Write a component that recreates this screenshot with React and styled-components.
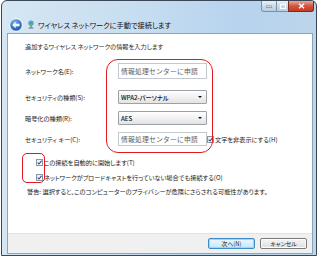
import React from 'react'
import styled, { createGlobalStyle } from 'styled-components'

const Global = createGlobalStyle`
  html, body {
    margin: 0;
    background: #ffffff;
  }
  body {
    font-family: "Noto Sans CJK JP", "Noto Sans", sans-serif;
    font-feature-settings: "palt";
    color: #1e1e1e;
  }
`

const Window = styled.div`
  box-sizing: border-box;
  margin-left: 1px;
  width: 316px;
  height: 256px;
  border: 1px solid #3a4756;
  border-radius: 6px 6px 0 0;
  background: linear-gradient(90deg, #d6e6f3 0%, #c6ddf1 45%, #b7d3ee 75%, #bcd5ea 100%);
  display: flex;
  flex-direction: column;
  padding: 0 3px 1px 5px;
`

const TitleBar = styled.div`
  height: 32px;
  display: flex;
  flex-direction: column;
`

const Controls = styled.div`
  display: flex;
  justify-content: flex-end;
  margin-right: -1px;
  height: 11px;
`

const Ctrl = styled.div`
  box-sizing: border-box;
  width: ${p => p.$w}px;
  height: 11px;
  border: 1px solid ${p => (p.$close ? '#7a2a22' : '#7d8fa3')};
  border-top: none;
  margin-left: -1px;
  border-radius: ${p => p.$r || '0'};
  background: ${p =>
    p.$close
      ? 'linear-gradient(#e9a99c, #d2553f 50%, #c43b23)'
      : 'linear-gradient(#e9f1f8, #c9dbea 50%, #b9cfe2)'};
  display: flex;
  align-items: center;
  justify-content: center;
`

const Nav = styled.div`
  display: flex;
  align-items: center;
  height: 18px;
  margin-top: 4px;
  padding-left: 2px;
  gap: 4px;
`

const Title = styled.span`
  font-size: 7.2px;
  color: #111;
  margin-left: -1px;
`

const Content = styled.div`
  flex: 1;
  display: flex;
  flex-direction: column;
  background: #ffffff;
  border: 1px solid #8ea3b9;
`

const Body = styled.div`
  position: relative;
  flex: 1;
  padding: 6px 0 0 17px;
  font-size: 6.2px;
`

const Heading = styled.div`
  height: 12px;
  display: flex;
  align-items: center;
  color: #2a2a2a;
`

const Form = styled.div`
  margin-top: 11px;
  display: grid;
  grid-template-columns: 93px 89px auto;
  align-items: center;
`

const Label = styled.div`
  height: ${p => p.$h}px;
  margin-top: ${p => p.$mt || 0}px;
  display: flex;
  align-items: center;
  color: #1a1a1a;
`

const TextBox = styled.div`
  box-sizing: border-box;
  height: ${p => p.$h}px;
  margin-top: ${p => p.$mt || 0}px;
  border: 1px solid #c4c9cf;
  background: #fff;
  padding-left: 2px;
  display: flex;
  align-items: center;
  font-size: 6.8px;
  color: #5e5e5e;
  letter-spacing: 0.2px;
  font-feature-settings: normal;
`

const Select = styled.div`
  box-sizing: border-box;
  height: 14px;
  margin-top: ${p => p.$mt || 0}px;
  border: 1px solid #9aa1a8;
  border-radius: 1px;
  background: linear-gradient(#ffffff, #f1f1f1 50%, #e3e3e3);
  padding: 0 4px 0 2px;
  display: flex;
  align-items: center;
  justify-content: space-between;
  color: #111;
  font-weight: 500;
`

const Arrow = styled.span`
  width: 0;
  height: 0;
  border-left: 2px solid transparent;
  border-right: 2px solid transparent;
  border-top: 2.5px solid #111;
`

const Check = styled.span`
  box-sizing: border-box;
  flex: none;
  width: 7px;
  height: 7px;
  border: 1px solid #8796a7;
  background: linear-gradient(#e9eef3, #ffffff);
  display: flex;
  align-items: center;
  justify-content: center;
`

const Inline = styled.div`
  display: flex;
  align-items: center;
  gap: ${p => p.$gap || 1}px;
  margin-top: ${p => p.$mt || 0}px;
  margin-left: ${p => p.$ml || 0}px;
  height: ${p => p.$h || 10}px;
  color: #1a1a1a;
  white-space: nowrap;
`

const Mark = styled.div`
  position: absolute;
  left: ${p => p.$x}px;
  top: ${p => p.$y}px;
  width: ${p => p.$w}px;
  height: ${p => p.$h}px;
  border: 1.5px solid #e0191e;
  border-radius: ${p => p.$r}px;
  box-sizing: border-box;
  pointer-events: none;
`

const Footer = styled.div`
  height: 20px;
  box-sizing: border-box;
  background: #f0f0f0;
  border-top: 1px solid #e2e2e2;
  display: flex;
  justify-content: flex-end;
  align-items: center;
  gap: 5px;
  padding-right: 5px;
`

const Button = styled.div`
  box-sizing: border-box;
  width: 47px;
  height: 11px;
  border: 1px solid ${p => (p.$primary ? '#3c8dc6' : '#7a7a7a')};
  border-radius: 2px;
  background: ${p =>
    p.$primary
      ? 'linear-gradient(#eaf6fd, #d9f0fc 50%, #bee6fd)'
      : 'linear-gradient(#f4f4f4, #ebebeb 50%, #dcdcdc)'};
  box-shadow: ${p => (p.$primary ? 'inset 0 0 0 1px #9fd5f5' : 'inset 0 0 0 1px #fcfcfc')};
  display: flex;
  align-items: center;
  justify-content: center;
  font-size: 5.8px;
  color: #222;
`

const Tick = () => (
  <svg width="5" height="5" viewBox="0 0 5 5">
    <path d="M0.6 2.6 L2 4 L4.5 0.8" stroke="#2a4f86" strokeWidth="1.1" fill="none" />
  </svg>
)

const BackButton = () => (
  <svg width="14" height="14" viewBox="0 0 14 14">
    <defs>
      <radialGradient id="bg" cx="0.4" cy="0.3" r="0.8">
        <stop offset="0" stopColor="#7fb4ec" />
        <stop offset="0.6" stopColor="#2f6fc4" />
        <stop offset="1" stopColor="#1a4d98" />
      </radialGradient>
    </defs>
    <circle cx="7" cy="7" r="6.3" fill="url(#bg)" stroke="#ffffff" strokeWidth="1" />
    <path d="M3.3 7 L6.6 3.8 L6.6 5.8 L10.5 5.8 L10.5 8.2 L6.6 8.2 L6.6 10.2 Z" fill="#ffffff" />
  </svg>
)

const NetIcon = () => (
  <svg width="8" height="9" viewBox="0 0 8 9">
    <circle cx="4" cy="3" r="2.6" fill="#3a8ad6" />
    <path d="M2.2 2.2 Q4 1 5.8 2.2 M1.8 3.6 Q4 5 6.2 3.6" stroke="#7ccf5a" strokeWidth="0.9" fill="none" />
    <rect x="3.4" y="5.4" width="1.2" height="2.2" fill="#5a6a7a" />
    <rect x="1.6" y="7.4" width="4.8" height="1.2" fill="#6c7c8c" />
  </svg>
)

export default function App() {
  return (
    <>
      <Global />
      <Window>
        <TitleBar>
          <Controls>
            <Ctrl $w={16} $r="0 0 0 3px">
              <svg width="6" height="3" viewBox="0 0 6 3"><rect x="0" y="1" width="6" height="1.6" fill="#fff" stroke="#44556a" strokeWidth="0.5" /></svg>
            </Ctrl>
            <Ctrl $w={13}>
              <svg width="6" height="5" viewBox="0 0 6 5"><rect x="0.5" y="0.5" width="5" height="4" fill="none" stroke="#fff" strokeWidth="1" /></svg>
            </Ctrl>
            <Ctrl $w={26} $close $r="0 0 3px 0">
              <svg width="7" height="6" viewBox="0 0 7 6"><path d="M1 0.8 L6 5.2 M6 0.8 L1 5.2" stroke="#fff" strokeWidth="1.5" /></svg>
            </Ctrl>
          </Controls>
          <Nav>
            <BackButton />
            <NetIcon />
            <Title>ワイヤレス ネットワークに手動で接続します</Title>
          </Nav>
        </TitleBar>
        <Content>
          <Body>
            <Heading>追加するワイヤレス ネットワークの情報を入力します</Heading>
            <Form>
              <Label $h={16}>ネットワーク名(E):</Label>
              <TextBox $h={16}>情報処理センターに申請</TextBox>
              <span />
              <Label $h={14} $mt={11}>セキュリティの種類(S):</Label>
              <Select $mt={11}>WPA2-パーソナル<Arrow /></Select>
              <span />
              <Label $h={14} $mt={7}>暗号化の種類(R):</Label>
              <Select $mt={7}>AES<Arrow /></Select>
              <span />
              <Label $h={14} $mt={7}>セキュリティ キー(C):</Label>
              <TextBox $h={14} $mt={7}>情報処理センターに申請</TextBox>
              <Inline $mt={7} $h={14} $gap={1}>
                <Check><Tick /></Check>
                文字を非表示にする(H)
              </Inline>
            </Form>
            <Inline $mt={11} $ml={11}>
              <Check><Tick /></Check>
              この接続を自動的に開始します(T)
            </Inline>
            <Inline $mt={5} $ml={11}>
              <Check><Tick /></Check>
              ネットワークがブロードキャストを行っていない場合でも接続する(O)
            </Inline>
            <Inline $mt={4} $ml={2}>
              警告: 選択すると、このコンピューターのプライバシーが危険にさらされる可能性があります。
            </Inline>
            <Mark $x={98} $y={25} $w={107} $h={94} $r={12} />
            <Mark $x={14} $y={119} $w={23} $h={30} $r={5} />
          </Body>
          <Footer>
            <Button $primary>次へ(N)</Button>
            <Button>キャンセル</Button>
          </Footer>
        </Content>
      </Window>
    </>
  )
}
